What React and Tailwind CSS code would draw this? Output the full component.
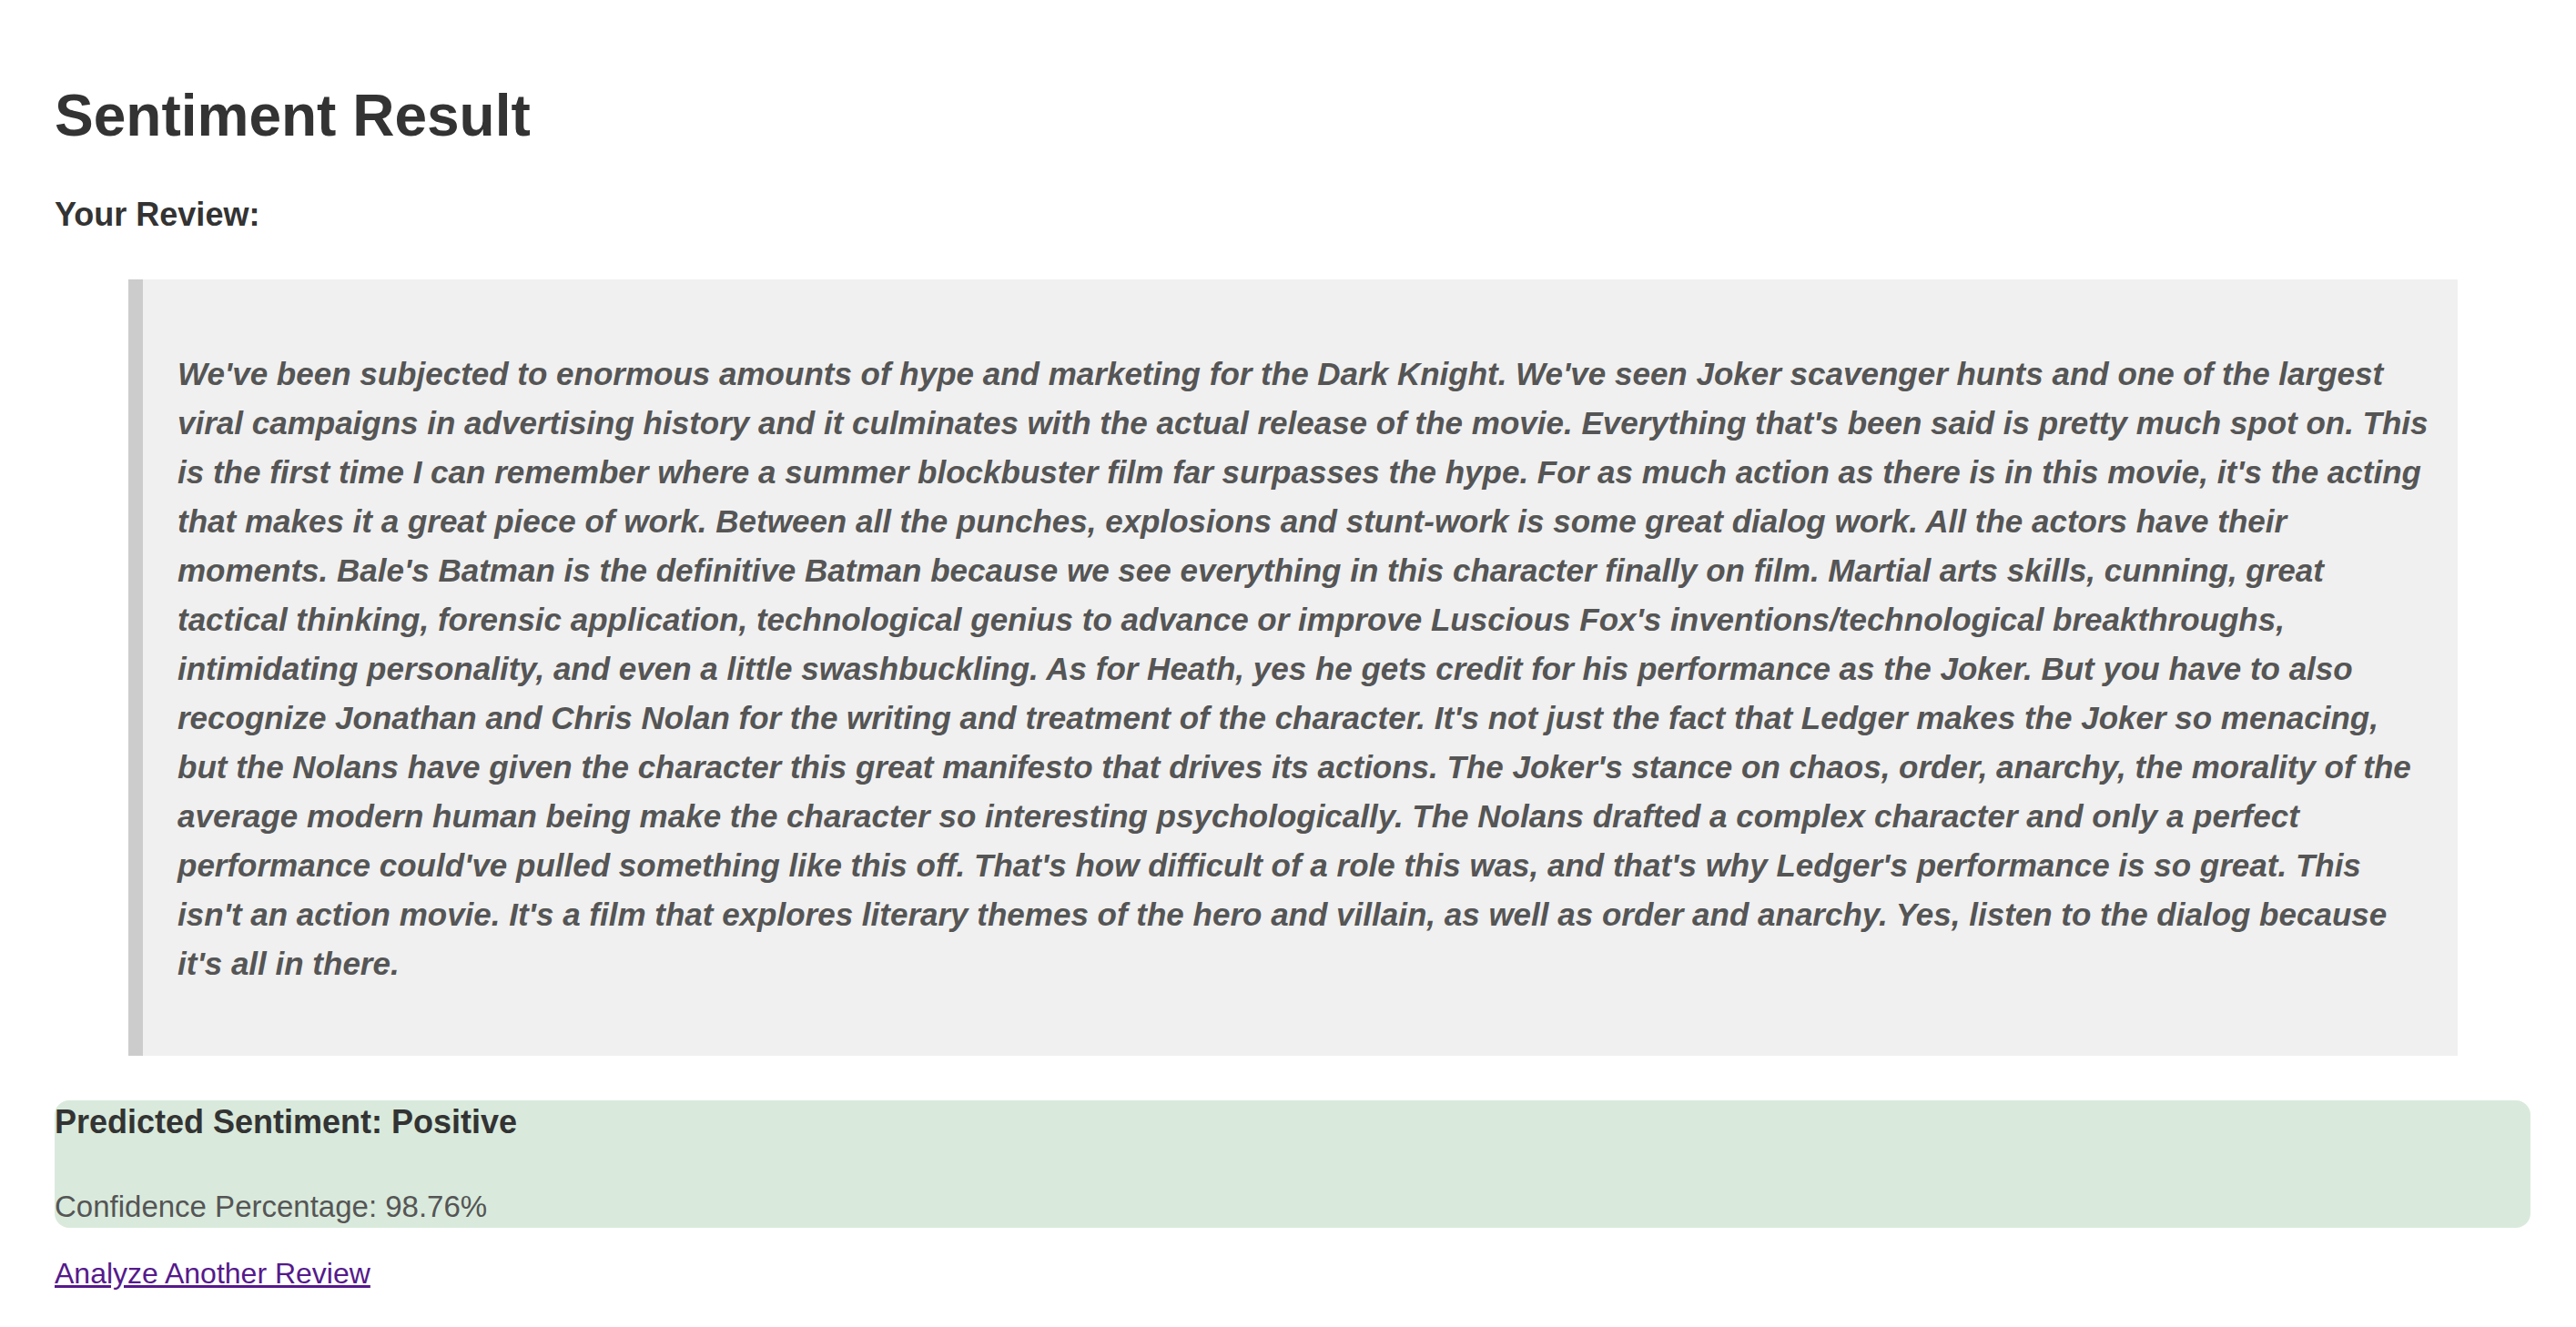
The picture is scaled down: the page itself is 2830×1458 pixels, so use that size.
import React from 'react';

// line breaks follow the original render
const reviewLines = [
  "We've been subjected to enormous amounts of hype and marketing for the Dark Knight. We've seen Joker scavenger hunts and one of the largest",
  "viral campaigns in advertising history and it culminates with the actual release of the movie. Everything that's been said is pretty much spot on. This",
  "is the first time I can remember where a summer blockbuster film far surpasses the hype. For as much action as there is in this movie, it's the acting",
  "that makes it a great piece of work. Between all the punches, explosions and stunt-work is some great dialog work. All the actors have their",
  "moments. Bale's Batman is the definitive Batman because we see everything in this character finally on film. Martial arts skills, cunning, great",
  "tactical thinking, forensic application, technological genius to advance or improve Luscious Fox's inventions/technological breakthroughs,",
  "intimidating personality, and even a little swashbuckling. As for Heath, yes he gets credit for his performance as the Joker. But you have to also",
  "recognize Jonathan and Chris Nolan for the writing and treatment of the character. It's not just the fact that Ledger makes the Joker so menacing,",
  "but the Nolans have given the character this great manifesto that drives its actions. The Joker's stance on chaos, order, anarchy, the morality of the",
  "average modern human being make the character so interesting psychologically. The Nolans drafted a complex character and only a perfect",
  "performance could've pulled something like this off. That's how difficult of a role this was, and that's why Ledger's performance is so great. This",
  "isn't an action movie. It's a film that explores literary themes of the hero and villain, as well as order and anarchy. Yes, listen to the dialog because",
  "it's all in there.",
];

const App = () => {
  return (
    <div className="min-h-screen bg-white pt-[90px] pl-[60px] pr-[50px] font-['Liberation_Sans',Arial,sans-serif]">
      <h1 className="text-[64px] leading-[74px] font-bold text-[#333]">Sentiment Result</h1>

      <h3 className="mt-[51px] text-[36px] leading-[42px] font-bold text-[#333]">Your Review:</h3>

      <blockquote className="mt-[50px] ml-[81px] mr-[80px] bg-[#f0f0f0] border-l-[16px] border-[#ccc] pl-[38px] pr-[20px] pt-[77px] pb-[74px]">
        <p className="text-[35px] leading-[54px] font-bold italic text-[#555]">
          {reviewLines.map((line, i) => (
            <span key={i} className="block whitespace-nowrap">{line}</span>
          ))}
        </p>
      </blockquote>

      <div className="mt-[49px] bg-[#d9eadc] rounded-[16px] pt-[3px] pb-[5px]">
        <h3 className="text-[36px] leading-[42px] font-bold text-[#333]">Predicted Sentiment: Positive</h3>
        <p className="mt-[53px] text-[33px] leading-[37px] text-[#555]">Confidence Percentage: 98.76%</p>
      </div>

      <a href="#" className="inline-block mt-[32px] text-[32px] leading-[37px] text-[#551a8b] underline">
        Analyze Another Review
      </a>
    </div>
  );
};

export default App;
